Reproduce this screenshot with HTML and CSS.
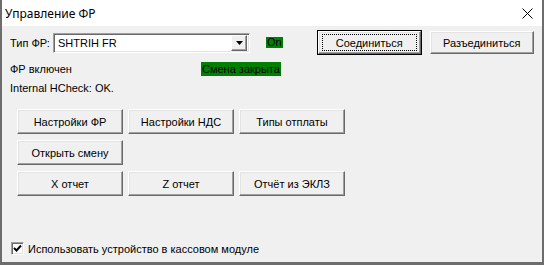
FILE: index.html
```html
<!DOCTYPE html>
<html lang="ru">
<head>
  <meta charset="UTF-8">
  <title>Управление ФР</title>
  <link rel="stylesheet" href="styles.css">
</head>
<body>
  <div class="window">
    <div class="titlebar">
      <span class="titlebar__text">Управление ФР</span>
      <svg class="titlebar__close" width="11" height="11" viewBox="0 0 11 11">
        <path d="M0.5 0.5 L10.5 10.5 M10.5 0.5 L0.5 10.5" stroke="#000" stroke-width="1" fill="none"/>
      </svg>
    </div>

    <div class="content">
      <div class="top-row">
        <span class="top-row__label">Тип ФР:</span>
        <div class="combo">
          <span class="combo__value">SHTRIH FR</span>
          <span class="combo__arrow">
            <svg width="7" height="4" viewBox="0 0 7 4"><path d="M0 0 H7 L3.5 4 Z" fill="#000"/></svg>
          </span>
        </div>
        <span class="badge badge--on">On</span>
        <button class="btn btn--default btn--connect"><span class="btn__focus">Соединиться</span></button>
        <button class="btn btn--disconnect">Разъединиться</button>
      </div>

      <div class="status-row">
        <span class="status-row__label">ФР включен</span>
        <span class="badge">Смена закрыта</span>
      </div>

      <div class="info">Internal HCheck: OK.</div>

      <div class="actions">
        <button class="btn">Настройки ФР</button>
        <button class="btn">Настройки НДС</button>
        <button class="btn">Типы отплаты</button>
        <button class="btn">Открыть смену</button>
        <span></span>
        <span></span>
        <button class="btn">X отчет</button>
        <button class="btn">Z отчет</button>
        <button class="btn">Отчёт из ЭКЛЗ</button>
      </div>

      <label class="check">
        <span class="check__box">
          <svg width="9" height="9" viewBox="0 0 9 9"><path d="M1 4 L3.5 6.5 L8 1.5" stroke="#000" stroke-width="2" fill="none"/></svg>
        </span>
        Использовать устройство в кассовом модуле
      </label>
    </div>
  </div>
</body>
</html>
```

FILE: styles.css
```css
html {
  box-sizing: border-box;
}

*, *:before, *:after {
  box-sizing: inherit;
}

body {
  margin: 0;
  font-family: 'Liberation Sans', Arial, sans-serif;
  font-size: 11px;
  color: #000;
}

.window {
  width: 544px;
  height: 265px;
  display: flex;
  flex-direction: column;
  background: #f0f0f0;
  border-left: 2px solid #6d6d6d;
  border-right: 2px solid #6d6d6d;
  border-bottom: 3px solid #6d6d6d;
}

.titlebar {
  height: 26px;
  flex: none;
  display: flex;
  align-items: center;
  justify-content: space-between;
  background: #fff;
  padding: 0 9px 0 3px;
}

.titlebar__text {
  font-family: 'Noto Sans', sans-serif;
  font-size: 12px;
}

.content {
  flex: 1;
  display: flex;
  flex-direction: column;
  padding: 5px 8px 7px;
}

.top-row {
  display: flex;
  align-items: center;
  height: 23px;
}

.top-row__label {
  width: 43px;
}

.combo {
  width: 197px;
  height: 20px;
  display: flex;
  align-items: center;
  background: #fff;
  border: 1px solid;
  border-color: #a0a0a0 #fff #fff #a0a0a0;
  box-shadow: inset 1px 1px #696969, inset -1px -1px #e3e3e3;
  padding: 2px;
}

.combo__value {
  flex: 1;
  padding-left: 2px;
}

.combo__arrow {
  width: 16px;
  height: 16px;
  display: flex;
  align-items: center;
  justify-content: center;
  background: #f0f0f0;
  border: 1px solid;
  border-color: #fff #696969 #696969 #fff;
  box-shadow: inset -1px -1px #a0a0a0;
}

.badge {
  background: #008000;
  color: #000;
  line-height: 14px;
  padding: 0 1px;
}

.badge--on {
  margin-left: 16px;
  line-height: 11px;
}

.btn {
  font-family: 'Liberation Sans', Arial, sans-serif;
  font-size: 11px;
  color: #000;
  background: #f0f0f0;
  border: 1px solid;
  border-color: #fff #696969 #696969 #fff;
  box-shadow: inset -1px -1px #a0a0a0, inset 1px 1px #e3e3e3;
  padding: 0;
  height: 25px;
}

.btn--connect {
  margin-left: 35px;
  width: 103px;
  height: 23px;
}

.btn--default {
  outline: 1px solid #000;
  outline-offset: 0;
  border-color: #fff #696969 #696969 #fff;
}

.btn__focus {
  display: flex;
  align-items: center;
  justify-content: center;
  height: 17px;
  margin: 0 3px;
  border: 1px dotted #000;
}

.btn--disconnect {
  margin-left: 9px;
  width: 104px;
  height: 23px;
}

.status-row {
  display: flex;
  align-items: center;
  margin-top: 8px;
  height: 14px;
}

.status-row__label {
  width: 191px;
}

.info {
  margin-top: 5px;
  height: 14px;
  line-height: 14px;
}

.actions {
  display: grid;
  grid-template-columns: repeat(3, 106px);
  grid-auto-rows: 25px;
  column-gap: 5px;
  row-gap: 6px;
  margin-top: 14px;
  padding-left: 7px;
}

.check {
  margin-top: auto;
  display: flex;
  align-items: center;
  gap: 4px;
  padding-left: 1px;
}

.check__box {
  width: 13px;
  height: 13px;
  display: flex;
  align-items: center;
  justify-content: center;
  background: #fff;
  border: 1px solid;
  border-color: #a0a0a0 #fff #fff #a0a0a0;
  box-shadow: inset 1px 1px #696969, inset -1px -1px #e3e3e3;
}
```
